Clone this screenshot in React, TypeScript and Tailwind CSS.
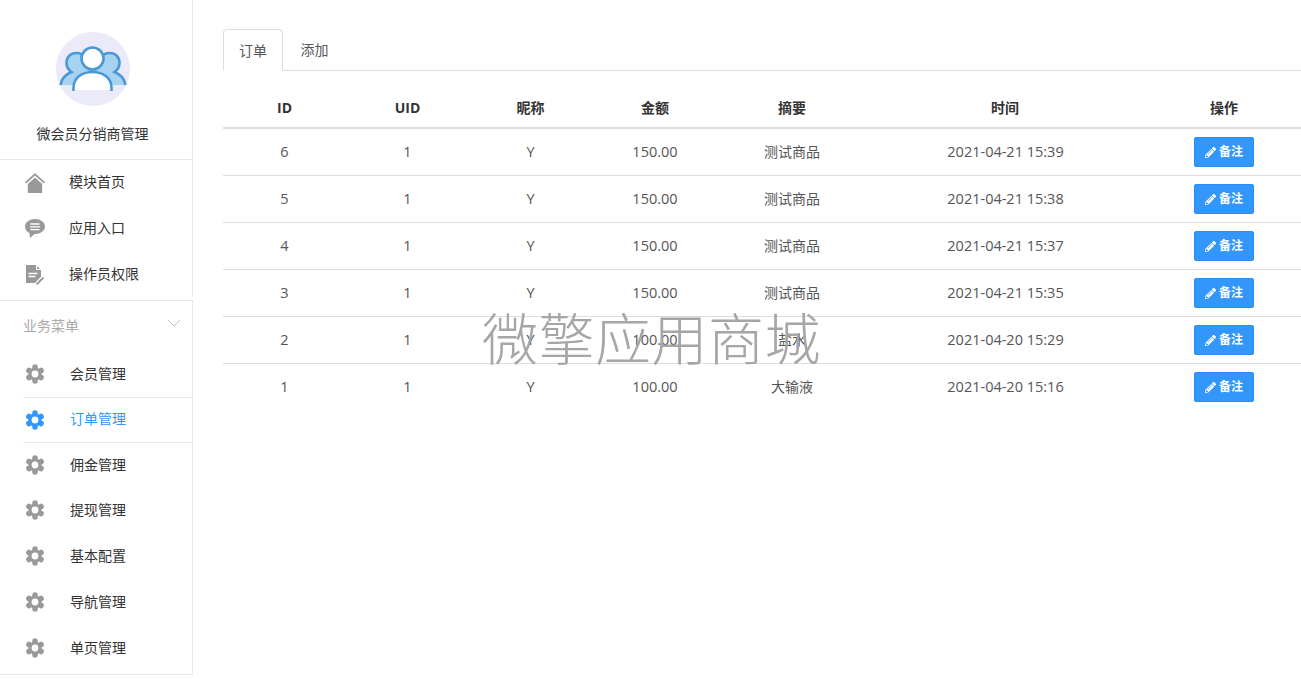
import React from 'react';
import { FaPencilAlt } from 'react-icons/fa';

const font = "[font-family:'Open_Sans','Noto_Sans_CJK_SC',sans-serif]";

const orders = [
  { id: 6, uid: 1, nick: 'Y', amount: '150.00', title: '测试商品', time: '2021-04-21 15:39' },
  { id: 5, uid: 1, nick: 'Y', amount: '150.00', title: '测试商品', time: '2021-04-21 15:38' },
  { id: 4, uid: 1, nick: 'Y', amount: '150.00', title: '测试商品', time: '2021-04-21 15:37' },
  { id: 3, uid: 1, nick: 'Y', amount: '150.00', title: '测试商品', time: '2021-04-21 15:35' },
  { id: 2, uid: 1, nick: 'Y', amount: '100.00', title: '盐水', time: '2021-04-20 15:29' },
  { id: 1, uid: 1, nick: 'Y', amount: '100.00', title: '大输液', time: '2021-04-20 15:16' },
];

const menu = [
  { name: '会员管理', h: 'h-[47px] border-b border-[#e7e7eb]' },
  { name: '订单管理', h: 'h-[45px] border-b border-[#e7e7eb]' },
  { name: '佣金管理', h: 'h-[44px]' },
  { name: '提现管理', h: 'h-[46px]' },
  { name: '基本配置', h: 'h-[46px]' },
  { name: '导航管理', h: 'h-[46px]' },
  { name: '单页管理', h: 'h-[46px]' },
];

const Logo = () => (
  <svg viewBox="0 0 74 74" className="w-[74px] h-[74px]">
    <circle cx="37" cy="37" r="37" fill="#eaeaf8" />
    <path d="M4.500 53c1-7 6-11 11-13-3-2-5-5-5-9 0-6 4-10 10-10 4 0 7 2 9 5h15c2-3 5-5 9-5 6 0 10 4 10 10 0 4-2 7-5 9 5 2 10 6 11 13z" fill="#a6d3f0" />
    <path d="M4.500 53c1-7 6-11 11-13-3-2-5-5-5-9 0-6 4-10 10-10 4 0 7 2 9 5M44.500 26c2-3 5-5 9-5 6 0 10 4 10 10 0 4-2 7-5 9 5 2 10 6 11 13" fill="none" stroke="#4a98d6" strokeWidth="2.600" />
    <path d="M17 58v-2c0-10 8-17 19.500-17S56 46 56 56v2z" fill="#fff" />
    <path d="M17.500 59v-3c0-10 8-16 19-16s19 6 19 16v3" fill="none" stroke="#4a98d6" strokeWidth="2.600" />
    <circle cx="36.500" cy="26.500" r="11" fill="#fff" stroke="#4a98d6" strokeWidth="2.600" />
  </svg>
);

const HomeIcon = () => (
  <svg viewBox="0 0 20 20" className="w-5 h-5" fill="#999">
    <path d="M10 0 0 9.200l1.200 1.300L10 2.600l8.800 7.900L20 9.200z" />
    <path d="M10 4.600 2.800 11v9h14.400v-9z" />
  </svg>
);

const ChatIcon = () => (
  <svg viewBox="0 0 20 20" className="w-5 h-5">
    <path d="M10 0C4.500 0 0 3.200 0 7.500c0 3 2 5.300 4.500 6.500L5 19l4.500-4H10c5.500 0 10-3.200 10-7.500S15.500 0 10 0z" fill="#999" />
    <path d="M5.500 5h9M5 7.800h10M5.500 10.600h9" stroke="#fff" strokeWidth="1.300" />
  </svg>
);

const DocIcon = () => (
  <svg viewBox="0 0 20 20" className="w-5 h-5">
    <path d="M1 0h10l5 5v6.500L10 18H1z" fill="#999" />
    <path d="M11.500 0v4.500H16" fill="none" stroke="#fff" strokeWidth="1" />
    <path d="M3.500 8.500h9M3.500 11.500h7" stroke="#fff" strokeWidth="1.500" />
    <path d="M11.500 19.500l7-7" stroke="#999" strokeWidth="1.800" />
  </svg>
);

const Gear = ({ color }: { color: string }) => (
  <svg viewBox="-10 -10 20 20" className="w-5 h-5" stroke={color} strokeWidth="5.500" strokeLinecap="round">
    <path d="M0-7V7M-6.100-3.500 6.100 3.500M-6.100 3.500 6.100-3.500" />
    <circle r="6.500" fill={color} stroke="none" />
    <circle r="3.400" fill="#fff" stroke="none" />
  </svg>
);

const TopItem = ({ icon, label }: { icon: React.ReactNode; label: string }) => (
  <div className="flex items-center h-[46px] pl-[25px]">
    <div className="w-5 flex justify-center">{icon}</div>
    <span className="ml-[24px] text-[14px] leading-[20px] mb-[3px] text-[#333]">{label}</span>
  </div>
);

const App = () => {
  return (
    <div className={`relative flex w-full h-[679px] overflow-hidden bg-white ${font}`}>
      <aside className="w-[193px] shrink-0 h-full">
        <div className="h-[160px] border-b border-r border-[#e7e7eb] flex flex-col items-center pt-[32px] pr-[7px]">
          <Logo />
          <div className="mt-[18px] text-[14px] leading-[20px] text-[#333]">微会员分销商管理</div>
        </div>
        <div className="h-[137px] border-r border-[#e7e7eb]">
          <TopItem icon={<HomeIcon />} label="模块首页" />
          <TopItem icon={<ChatIcon />} label="应用入口" />
          <TopItem icon={<DocIcon />} label="操作员权限" />
        </div>
        <div className="mt-[3px] border-t border-r border-[#e7e7eb]">
          <div className="flex items-center justify-between h-[50px] pl-[23px] pr-[11px]">
            <span className="text-[14px] text-[#aaa] mb-[1px]">业务菜单</span>
            <svg viewBox="0 0 14 8" className="w-[14px] h-2 mb-[7px]" fill="none" stroke="#b4bcc8" strokeWidth="1">
              <path d="M1 1l6 6 6-6" />
            </svg>
          </div>
          <div className="pb-[3px] border-b border-[#e7e7eb]">
            {menu.map((m) => {
              const active = m.name === '订单管理';
              return (
                <div key={m.name} className={`ml-[23px] flex items-center ${m.h}`}>
                  <div className="ml-[2px]">
                    <Gear color={active ? '#3296fa' : '#999'} />
                  </div>
                  <span className={`ml-[25px] text-[14px] leading-[20px] ${active ? 'text-[#3296fa] mb-[2px]' : 'text-[#333]'}`}>
                    {m.name}
                  </span>
                </div>
              );
            })}
          </div>
        </div>
      </aside>

      <main className="flex-1 min-w-0 pl-[30px] pt-[29px]">
        <div className="flex h-[42px] border-b border-[#ddd] text-[14px]">
          <div className="w-[60px] h-[42px] flex items-center justify-center bg-white border border-[#ddd] border-b-white rounded-t-[4px] text-[#555]">
            订单
          </div>
          <div className="w-[63px] flex items-center justify-center text-[#555]">添加</div>
        </div>

        <table className="w-[1078px] mt-[14px] table-fixed border-collapse text-[14.500px] text-[#555]">
          <colgroup>
            <col className="w-[123px]" />
            <col className="w-[123px]" />
            <col className="w-[123px]" />
            <col className="w-[126px]" />
            <col className="w-[148px]" />
            <col className="w-[281px]" />
            <col className="w-[154px]" />
          </colgroup>
          <thead>
            <tr className="h-[43px] border-b-2 border-[#ddd] text-[#333] text-[14px]">
              <th className="font-bold pt-[3px]">ID</th>
              <th className="font-bold pt-[3px]">UID</th>
              <th className="font-bold pt-[3px]">昵称</th>
              <th className="font-bold pt-[3px]">金额</th>
              <th className="font-bold pt-[3px]">摘要</th>
              <th className="font-bold pt-[3px] pr-[3px]">时间</th>
              <th className="font-bold pt-[3px]">操作</th>
            </tr>
          </thead>
          <tbody>
            {orders.map((o, i) => (
              <tr key={o.id} className={`h-[47px] text-center ${i < orders.length - 1 ? 'border-b border-[#ddd]' : ''}`}>
                <td>{o.id}</td>
                <td>{o.uid}</td>
                <td>{o.nick}</td>
                <td>{o.amount}</td>
                <td className="text-[14px]">{o.title}</td>
                <td className="pr-[2px]">{o.time}</td>
                <td>
                  <button className="inline-flex items-center justify-center w-[60px] h-[30px] pt-[1px] rounded-[2px] bg-[#3296fa] border border-[#2b8ef0] text-white text-[12px] font-bold">
                    <FaPencilAlt className="text-[11px] mr-[3px]" />
                    备注
                  </button>
                </td>
              </tr>
            ))}
          </tbody>
        </table>
      </main>

      <div className="absolute left-[482px] top-[300px] text-[56px] leading-[76px] tracking-[0.5px] font-light text-[#a6a6a6] pointer-events-none whitespace-nowrap">
        微擎应用商城
      </div>
    </div>
  );
};

export default App;
